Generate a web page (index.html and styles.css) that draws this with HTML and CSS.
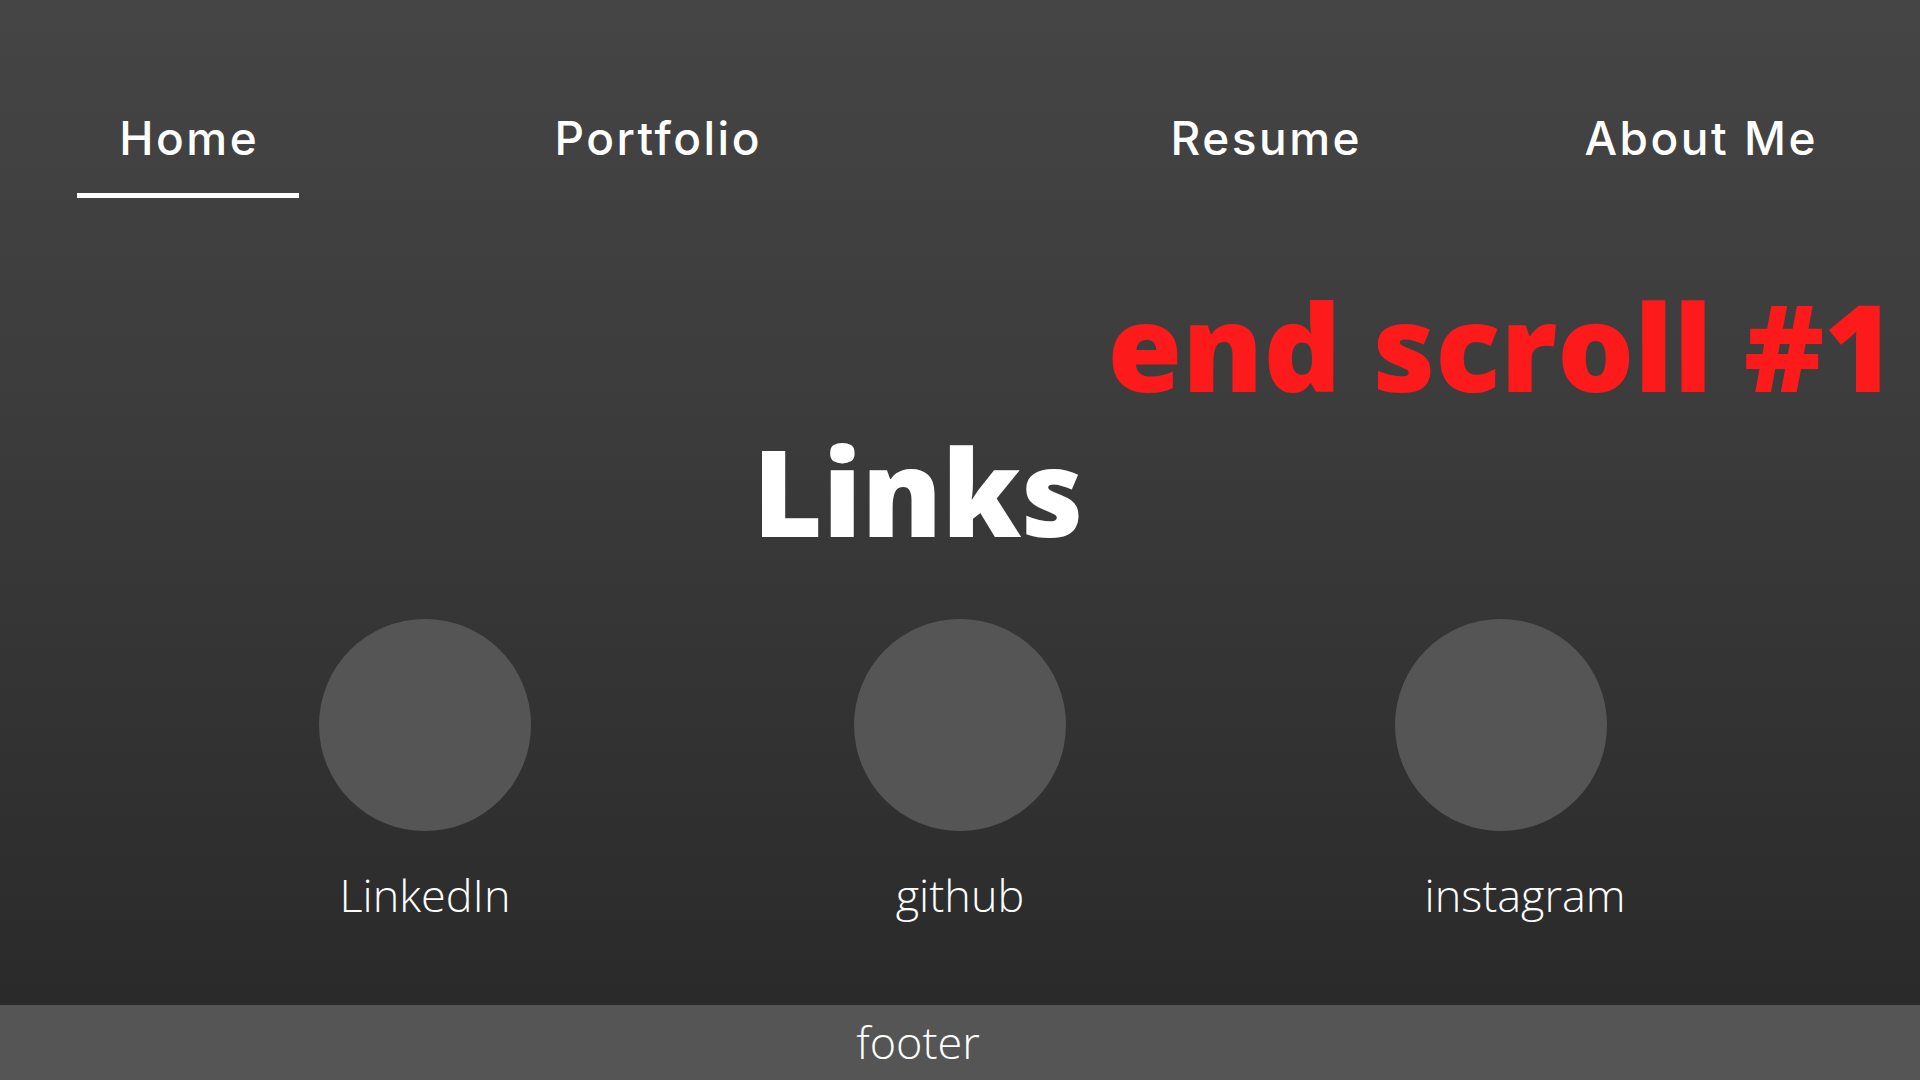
FILE: index.html
```html
<!DOCTYPE html>
<html lang="en">
<head>
<meta charset="utf-8">
<title>Links</title>
<link rel="stylesheet" href="styles.css">
</head>
<body>
<div class="page">
  <nav class="nav">
    <a class="nav-item nav-home active" href="#">Home</a>
    <a class="nav-item nav-portfolio" href="#">Portfolio</a>
    <a class="nav-item nav-resume" href="#">Resume</a>
    <a class="nav-item nav-about" href="#">About Me</a>
  </nav>
  <div class="note-row"><span class="note">end scroll #1</span></div>
  <h1 class="title">Links</h1>
  <div class="links">
    <div class="link link-linkedin">
      <div class="circle"></div>
      <div class="label">LinkedIn</div>
    </div>
    <div class="link link-github">
      <div class="circle"></div>
      <div class="label">github</div>
    </div>
    <div class="link link-instagram">
      <div class="circle"></div>
      <div class="label">instagram</div>
    </div>
  </div>
</div>
<footer class="footer">footer</footer>
</body>
</html>
```

FILE: styles.css
```css
html, body {
  margin: 0;
  padding: 0;
}
body {
  width: 1920px;
  height: 1080px;
  overflow: hidden;
  background: #555555;
  font-family: "Open Sans", "Liberation Sans", sans-serif;
  color: #ffffff;
}
.page {
  height: 1005px;
  background: linear-gradient(to bottom, #454545 0%, #3c3c3c 40%, #2a2a2a 100%);
  overflow: hidden;
}
.nav {
  display: flex;
  padding-top: 115px;
}
.nav-item {
  display: block;
  box-sizing: border-box;
  width: 222px;
  padding-left: 2.5px;
  text-align: center;
  font-family: Inter, "Liberation Sans", sans-serif;
  font-weight: 500;
  font-size: 46px;
  letter-spacing: 2.5px;
  line-height: 1;
  color: #ffffff;
  text-decoration: none;
  padding-bottom: 37px;
  white-space: nowrap;
}
.nav-item.active {
  padding-bottom: 32px;
  border-bottom: 5px solid #ffffff;
}
.nav-home { margin-left: 77px; }
.nav-portfolio { margin-left: 247px; }
.nav-resume { margin-left: 386px; }
.nav-about { margin-left: 206px; }

.note-row {
  display: flex;
  justify-content: flex-end;
  padding-right: 25px;
  margin-top: 87px;
}
.note {
  font-weight: 800;
  font-size: 121px;
  line-height: 1;
  color: #fd1a1a;
}
.title {
  margin: 25px 0 0 0;
  padding-right: 84px;
  text-align: center;
  font-weight: 800;
  font-size: 120px;
  line-height: 1;
}
.links {
  display: flex;
  margin-top: 68px;
}
.link {
  display: flex;
  flex-direction: column;
  align-items: center;
  width: 212px;
}
.link-linkedin { margin-left: 319px; }
.link-github { margin-left: 323px; }
.link-instagram { margin-left: 329px; }
.circle {
  width: 212px;
  height: 212px;
  border-radius: 50%;
  background: #555555;
}
.label {
  margin-top: 41px;
  font-weight: 300;
  font-size: 45px;
  line-height: 1;
  white-space: nowrap;
}
.link-instagram .label {
  margin-left: 48px;
}
.footer {
  height: 75px;
  box-sizing: border-box;
  padding: 14px 84px 0 0;
  text-align: center;
  font-weight: 300;
  font-size: 45px;
  line-height: 1;
  background: #555555;
}
```
